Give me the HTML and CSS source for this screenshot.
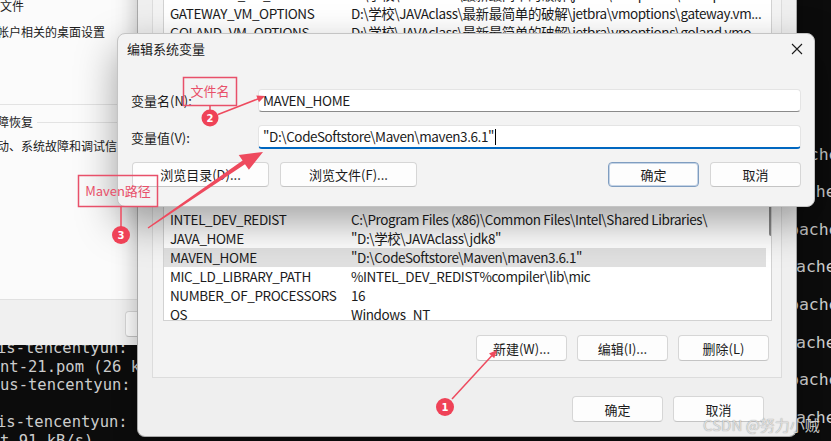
FILE: index.html
```html
<!DOCTYPE html>
<html lang="zh-CN">
<head>
  <meta charset="UTF-8" />
  <meta name="viewport" content="width=device-width, initial-scale=1.0"/>
  <title>编辑系统变量</title>
  <link rel="stylesheet" href="styles.css">
</head>
<body>
  <div class="desktop">

    <!-- 终端（最底层） -->
    <div class="term term-left">
      <div class="tl cut">is-tencentyun:</div>
      <div class="tl">nt-21.pom (26 kB</div>
      <div class="tl">us-tencentyun:</div>
      <div class="tl">&nbsp;</div>
      <div class="tl cut">is-tencentyun:</div>
      <div class="tl">t 91 kB/s)</div>
    </div>
    <div class="term term-right">
      <div class="tl">pache</div>
      <div class="tl">&nbsp;</div>
      <div class="tl in">ache</div>
      <div class="tl">&nbsp;</div>
      <div class="tl">pache</div>
      <div class="tl">&nbsp;</div>
      <div class="tl in">ache</div>
      <div class="tl">&nbsp;</div>
      <div class="tl">pache</div>
      <div class="tl">&nbsp;</div>
      <div class="tl in">ache</div>
      <div class="tl">&nbsp;</div>
      <div class="tl">pache</div>
      <div class="tl">&nbsp;</div>
      <div class="tl in">ache</div>
    </div>

    <!-- 系统属性窗口 -->
    <div class="settings-win">
      <div class="set-body">
        <div class="set-line first">文件</div>
        <div class="set-line second cut">帐户相关的桌面设置</div>
        <div class="set-sep"></div>
        <div class="set-group cut"><span>障恢复</span><i></i></div>
        <div class="set-line third cut">动、系统故障和调试信息</div>
      </div>
      <div class="set-foot">
        <button class="win-btn env-btn">环境变量(N)...</button>
      </div>
    </div>

    <!-- 环境变量窗口 -->
    <div class="env-dlg">
      <div class="env-group">
        <div class="var-list">
          <div class="var-rows">
            <div class="var-row"><span class="vn">DATASPELL_VM_OPTIONS</span><span class="vv">D:\学校\JAVAclass\最新最简单的破解\jetbra\vmoptions\dataspell.vm...</span></div>
            <div class="var-row"><span class="vn">GATEWAY_VM_OPTIONS</span><span class="vv">D:\学校\JAVAclass\最新最简单的破解\jetbra\vmoptions\gateway.vm...</span></div>
            <div class="var-row"><span class="vn">GOLAND_VM_OPTIONS</span><span class="vv">D:\学校\JAVAclass\最新最简单的破解\jetbra\vmoptions\goland.vmo...</span></div>
            <div class="row-gap"></div>
            <div class="var-row"><span class="vn">INTEL_DEV_REDIST</span><span class="vv">C:\Program Files (x86)\Common Files\Intel\Shared Libraries\</span></div>
            <div class="var-row"><span class="vn">JAVA_HOME</span><span class="vv">"D:\学校\JAVAclass\jdk8"</span></div>
            <div class="var-row selected"><span class="vn">MAVEN_HOME</span><span class="vv">"D:\CodeSoftstore\Maven\maven3.6.1"</span></div>
            <div class="var-row"><span class="vn">MIC_LD_LIBRARY_PATH</span><span class="vv">%INTEL_DEV_REDIST%compiler\lib\mic</span></div>
            <div class="var-row"><span class="vn">NUMBER_OF_PROCESSORS</span><span class="vv">16</span></div>
            <div class="var-row"><span class="vn">OS</span><span class="vv">Windows_NT</span></div>
          </div>
          <div class="var-scroll"><div class="thumb"></div></div>
        </div>
        <div class="btn-row">
          <button class="win-btn">新建(W)...</button>
          <button class="win-btn">编辑(I)...</button>
          <button class="win-btn">删除(L)</button>
        </div>
      </div>
      <div class="env-foot">
        <button class="win-btn">确定</button>
        <button class="win-btn">取消</button>
      </div>
    </div>

    <!-- 编辑系统变量 -->
    <div class="edit-dlg">
      <div class="edit-title">
        <span>编辑系统变量</span>
        <svg class="close-x" width="12" height="12" viewBox="0 0 12 12">
          <path d="M1 1 L11 11 M11 1 L1 11" stroke="#1a1a1a" stroke-width="1.1" fill="none"/>
        </svg>
      </div>
      <div class="edit-form">
        <div class="field-row">
          <label>变量名(N):</label>
          <div class="field">MAVEN_HOME</div>
        </div>
        <div class="field-row">
          <label>变量值(V):</label>
          <div class="field active">"D:\CodeSoftstore\Maven\maven3.6.1"<span class="caret"></span></div>
        </div>
        <div class="edit-btns">
          <button class="win-btn wide">浏览目录(D)...</button>
          <button class="win-btn wide">浏览文件(F)...</button>
          <span class="grow"></span>
          <button class="win-btn default">确定</button>
          <button class="win-btn">取消</button>
        </div>
      </div>
    </div>

    <!-- 标注 -->
    <svg class="annot" width="831" height="441" viewBox="0 0 831 441">
      <rect class="tag-box" x="183.5" y="77.5" width="53" height="28"/>
      <text class="tag-text" x="210" y="96">文件名</text>
      <line class="mark" x1="210" y1="105.5" x2="210" y2="110"/>
      <line class="mark" x1="218" y1="114.5" x2="259" y2="98.5"/>
      <polygon class="mark-fill" points="265,96 258.9,102.2 256.3,95.6"/>
      <circle class="dot" cx="210" cy="118" r="8.5"/>
      <text class="dot-num" x="210" y="121.5">2</text>

      <rect class="tag-box" x="78.5" y="175.5" width="79" height="31"/>
      <text class="tag-text" x="118" y="196">Maven路径</text>
      <line class="mark" x1="121" y1="206.5" x2="121" y2="227"/>
      <polygon class="mark-fill" points="147.6,227.4 242.6,160.6 238.7,155 263,152 248.9,169.8 245,164.2 148.4,228.6"/>
      <circle class="dot" cx="121" cy="235" r="9"/>
      <text class="dot-num" x="121" y="238.5">3</text>

      <line class="mark" x1="452" y1="399" x2="492" y2="355.5"/>
      <polygon class="mark-fill" points="497,350 494.2,358.3 489,353.5"/>
      <circle class="dot" cx="445" cy="407" r="9"/>
      <text class="dot-num" x="445" y="410.5">1</text>
    </svg>

    <div class="watermark">CSDN @努力小贼</div>
  </div>
</body>
</html>
```

FILE: styles.css
```css
body {
  margin: 0;
  font-family: "Noto Sans CJK SC", "Noto Sans", sans-serif;
  color: #1b1b1b;
}
.desktop {
  position: relative;
  width: 831px;
  height: 441px;
  overflow: hidden;
  background: #0c0c0c;
}

/* terminal */
.term {
  position: absolute;
  font-family: "DejaVu Sans Mono", monospace;
  font-size: 15.5px;
  line-height: 18.5px;
  color: #cccccc;
}
.term .tl {
  white-space: pre;
}
.term-left {
  left: 0;
  top: 339px;
}
.term-left .cut {
  margin-left: -3px;
}
.term-right {
  left: 789px;
  top: 145.6px;
  font-size: 16.5px;
  line-height: 18.8px;
}
.term-right .in {
  margin-left: 7px;
}

/* settings window behind */
.settings-win {
  position: absolute;
  left: 0;
  top: 0;
  width: 300px;
  height: 345px;
  background: #f0f0f0;
  font-size: 12px;
}
.set-body {
  height: 299px;
  background: #fbfbfb;
  border-bottom: 1px solid #e1e1e1;
  overflow: hidden;
}
.set-line {
  line-height: 18px;
  white-space: nowrap;
}
.set-line.first {
  margin-top: -3px;
}
.set-line.second {
  margin-top: 8px;
}
.set-line.third {
  margin-top: 6px;
}
.cut {
  margin-left: -3px;
}
.set-sep {
  margin-top: 63px;
  height: 1px;
  background: #e3e3e3;
}
.set-group {
  display: flex;
  align-items: center;
  margin-top: 8px;
  line-height: 18px;
}
.set-group i {
  flex: 1;
  height: 1px;
  margin-left: 4px;
  background: #e3e3e3;
}
.set-foot {
  padding: 11px 0 0 125px;
}

/* buttons */
.win-btn {
  width: 91px;
  height: 26px;
  padding: 0;
  font-family: inherit;
  font-size: 13px;
  color: #1b1b1b;
  background: #fdfdfd;
  border: 1px solid #d6d6d6;
  border-bottom-color: #c4c4c4;
  border-radius: 4px;
}
.env-btn {
  width: 130px;
}

/* environment variables dialog */
.env-dlg {
  position: absolute;
  left: 137px;
  top: -40px;
  width: 660px;
  height: 477px;
  box-sizing: border-box;
  padding: 0 14px;
  background: #efefef;
  border: 1px solid #a9a9a9;
  border-top: none;
  border-radius: 0 0 8px 8px;
  box-shadow: 0 6px 24px rgba(0, 0, 0, 0.28);
}
.env-group {
  height: 418px;
  box-sizing: border-box;
  padding: 23.5px 9px 0 10px;
  background: #f3f3f3;
  border: 1px solid #dcdcdc;
  border-top: none;
}
.var-list {
  display: flex;
  height: 337.5px;
  box-sizing: border-box;
  background: #fff;
  border: 1px solid #d2d2d2;
  overflow: hidden;
  font-size: 13.5px;
  letter-spacing: -0.4px;
}
.var-rows {
  flex: 1;
}
.var-row {
  display: flex;
  height: 19px;
  line-height: 19px;
  padding-left: 6px;
  white-space: nowrap;
}
.var-row.selected {
  background: #e0e0e0;
}
.vn {
  width: 181px;
  flex-shrink: 0;
}
.row-gap {
  height: 168px;
}
.var-scroll {
  width: 14px;
}
.thumb {
  width: 4px;
  height: 40px;
  margin: 211px 0 0 3px;
  background: #8a8a8a;
  border-radius: 2px;
}
.btn-row {
  display: flex;
  justify-content: flex-end;
  gap: 10px;
  margin-top: 14px;
  padding-right: 3px;
}
.env-foot {
  display: flex;
  justify-content: flex-end;
  gap: 10px;
  margin-top: 18px;
  padding-right: 18px;
}

/* edit dialog */
.edit-dlg {
  position: absolute;
  left: 117px;
  top: 33px;
  width: 698px;
  height: 174px;
  box-sizing: border-box;
  background: #f3f3f3;
  border: 1px solid #c4c4c4;
  border-radius: 8px;
  box-shadow: 0 16px 40px rgba(0, 0, 0, 0.36);
}
.edit-title {
  display: flex;
  align-items: center;
  justify-content: space-between;
  height: 29px;
  padding: 0 11px 0 9px;
  font-size: 13px;
}
.edit-form {
  padding: 26px 13px 0 13px;
  font-size: 13px;
}
.field-row {
  display: flex;
  align-items: center;
  margin-bottom: 13px;
}
.field-row label {
  width: 127px;
  flex-shrink: 0;
}
.field {
  flex: 1;
  height: 23px;
  box-sizing: border-box;
  padding-left: 4px;
  line-height: 21px;
  font-size: 13.5px;
  letter-spacing: -0.4px;
  background: #fff;
  border: 1px solid #e4e4e4;
  border-bottom-color: #8a8a8a;
  border-radius: 4px;
}
.field.active {
  height: 24px;
  border-bottom: 2px solid #0067c0;
}
.caret {
  display: inline-block;
  width: 1px;
  height: 16px;
  margin-left: 1px;
  vertical-align: -3px;
  background: #000;
}
.edit-btns {
  display: flex;
  gap: 11px;
  margin-top: 6px;
  padding-left: 1px;
}
.edit-btns .win-btn {
  height: 25px;
}
.edit-btns .wide {
  width: 137px;
}
.edit-btns .default {
  border: 1px solid #7f9dc0;
  box-shadow: inset 0 0 0 1px #c5d4e6;
}
.grow {
  flex: 1;
}

/* annotations */
.annot {
  position: absolute;
  left: 0;
  top: 0;
  pointer-events: none;
}
.tag-box {
  fill: none;
  stroke: #e8506a;
  stroke-width: 1.5;
}
.tag-text {
  font-family: "Noto Sans CJK SC", sans-serif;
  font-size: 13px;
  fill: #e8506a;
  text-anchor: middle;
}
.mark {
  stroke: #ee4a5e;
  stroke-width: 1.5;
}
.mark-fill {
  fill: #ee4a5e;
}
.dot {
  fill: #ef4257;
}
.dot-num {
  font-family: "DejaVu Sans", sans-serif;
  font-size: 10px;
  font-weight: bold;
  fill: #fff;
  text-anchor: middle;
}
.watermark {
  position: absolute;
  left: 703px;
  top: 414px;
  font-size: 15px;
  color: rgba(235, 235, 235, 0.85);
  text-shadow: 0 0 1px rgba(0, 0, 0, 0.45);
  white-space: nowrap;
}
```
